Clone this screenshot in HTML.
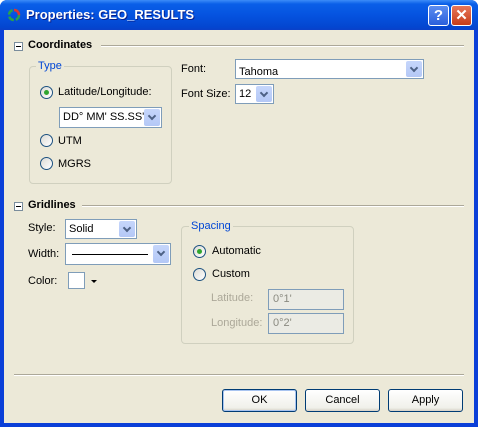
<!DOCTYPE html><html><head><style>
*{margin:0;padding:0;box-sizing:border-box}
body{width:478px;height:427px;overflow:hidden;font-family:"Liberation Sans",Arial,sans-serif;font-size:11px;color:#000;background:#fff}
.win{position:absolute;left:0;top:0;width:478px;height:427px;background:#0A3FD8;border-radius:7px 7px 0 0}
.tb{position:absolute;left:0;top:0;width:478px;height:30px;border-radius:7px 7px 0 0;background:linear-gradient(#3C8CF8 0,#0A5FE8 4px,#0553E0 50%,#0346D0 90%,#0A40C8 100%)}
.ttl{position:absolute;left:26px;top:7px;color:#fff;font-weight:bold;font-size:13px;text-shadow:1px 1px #0A1F8A}
.client{position:absolute;left:4px;top:30px;width:470px;height:393px;background:#ECE9D8}
.a{position:absolute;white-space:nowrap}
.mn{position:absolute;width:9px;height:9px;border:1px solid #7A8C9C;background:#fff}
.mn:after{content:"";position:absolute;left:1px;top:3px;width:5px;height:1px;background:#000}
.hl{position:absolute;height:2px;border-top:1px solid #ACA899;border-bottom:1px solid #fff}
.gb{position:absolute;border:1px solid #D0D0BF;border-radius:4px}
.gl{position:absolute;background:#ECE9D8;color:#0046D5;padding:0 2px}
.rb{position:absolute;width:13px;height:13px;border-radius:50%;border:1px solid #1C5180;background:linear-gradient(135deg,#DCDBD5,#fff)}
.rb.on:after{content:"";position:absolute;left:3px;top:3px;width:5px;height:5px;border-radius:50%;background:#2FA52F}
.cb{position:absolute;border:1px solid #7F9DB9;background:#fff}
.cb .t{position:absolute;left:3px;top:3px}
.dd{position:absolute;right:1px;top:1px;bottom:1px;width:16px;background:linear-gradient(#C6D6FB,#B4C8F6);border-radius:2px}
.dd:after{content:"";position:absolute;left:5px;top:4px;width:4px;height:4px;border-right:2px solid #4D6185;border-bottom:2px solid #4D6185;transform:rotate(45deg)}
.btn{position:absolute;width:75px;height:23px;border:1px solid #003C74;border-radius:3px;background:linear-gradient(#fff,#F0F0EA 85%,#D6D0C5);text-align:center;line-height:21px}
.dis{color:#ACA899}
.tx{position:absolute;border:1px solid #7F9DB9;background:#EBEBE4;color:#8A8A80;padding:3px 4px}
</style></head><body>
<div class="win">
<div class="tb"></div>
<svg class="a" style="left:7px;top:8px" width="14" height="14" viewBox="0 0 14 14"><circle cx="7" cy="7" r="5" fill="none" stroke="#2aa34a" stroke-width="2.5" stroke-dasharray="6 2"/><path d="M7 2a5 5 0 0 1 5 5" stroke="#d33" stroke-width="2.5" fill="none"/></svg>
<div class="ttl">Properties: GEO_RESULTS</div>
<div class="a" style="left:428px;top:5px;width:21px;height:21px;border:1px solid #fff;border-radius:3px;background:linear-gradient(#5C8DF0,#2A5FDC);color:#fff;font-weight:bold;font-size:15px;text-align:center;line-height:19px">?</div>
<div class="a" style="left:451px;top:5px;width:21px;height:21px;border:1px solid #fff;border-radius:3px;background:linear-gradient(#E8775A,#C63C18);color:#fff;font-weight:bold;font-size:15px;text-align:center;line-height:19px">✕</div>
<div class="client">
<div class="mn" style="left:10px;top:12px"></div>
<div class="a" style="left:24px;top:9px;font-weight:bold">Coordinates</div>
<div class="hl" style="left:97px;top:15px;width:363px"></div>
<div class="gb" style="left:25px;top:36px;width:143px;height:118px"></div>
<div class="gl" style="left:32px;top:30px">Type</div>
<div class="rb on" style="left:36px;top:56px"></div><div class="a" style="left:54px;top:56px">Latitude/Longitude:</div>
<div class="cb" style="left:55px;top:77px;width:103px;height:21px"><span class="t">DD° MM' SS.SS"</span><div class="dd"></div></div>
<div class="rb" style="left:36px;top:104px"></div><div class="a" style="left:54px;top:105px">UTM</div>
<div class="rb" style="left:36px;top:127px"></div><div class="a" style="left:54px;top:128px">MGRS</div>
<div class="a" style="left:177px;top:33px">Font:</div>
<div class="cb" style="left:231px;top:29px;width:189px;height:20px"><span class="t" style="top:6px">Tahoma</span><div class="dd"></div></div>
<div class="a" style="left:177px;top:58px">Font Size:</div>
<div class="cb" style="left:231px;top:54px;width:39px;height:20px"><span class="t">12</span><div class="dd"></div></div>
<div class="mn" style="left:10px;top:172px"></div>
<div class="a" style="left:24px;top:169px;font-weight:bold">Gridlines</div>
<div class="hl" style="left:78px;top:175px;width:382px"></div>
<div class="a" style="left:24px;top:192px">Style:</div>
<div class="cb" style="left:61px;top:189px;width:72px;height:20px"><span class="t">Solid</span><div class="dd"></div></div>
<div class="a" style="left:24px;top:218px">Width:</div>
<div class="cb" style="left:61px;top:213px;width:106px;height:22px"><div class="a" style="left:6px;top:10px;width:76px;height:1px;background:#000"></div><div class="dd"></div></div>
<div class="a" style="left:24px;top:245px">Color:</div>
<div class="a" style="left:64px;top:242px;width:17px;height:17px;border:1px solid #7F9DB9;background:#fff"></div>
<div class="a" style="left:87px;top:250px;border-left:3px solid transparent;border-right:3px solid transparent;border-top:3px solid #000"></div>
<div class="gb" style="left:177px;top:196px;width:173px;height:118px"></div>
<div class="gl" style="left:185px;top:190px">Spacing</div>
<div class="rb on" style="left:189px;top:215px"></div><div class="a" style="left:208px;top:215px">Automatic</div>
<div class="rb" style="left:189px;top:238px"></div><div class="a" style="left:208px;top:238px">Custom</div>
<div class="a dis" style="left:207px;top:262px">Latitude:</div>
<div class="tx" style="left:264px;top:259px;width:76px;height:21px">0°1'</div>
<div class="a dis" style="left:207px;top:287px">Longitude:</div>
<div class="tx" style="left:264px;top:283px;width:76px;height:21px">0°2'</div>
<div class="hl" style="left:10px;top:344px;width:450px"></div>
<div class="btn" style="left:218px;top:359px;box-shadow:inset 0 0 0 1px #A8C4F0">OK</div>
<div class="btn" style="left:301px;top:359px">Cancel</div>
<div class="btn" style="left:384px;top:359px">Apply</div>
</div></div>
</body></html>
